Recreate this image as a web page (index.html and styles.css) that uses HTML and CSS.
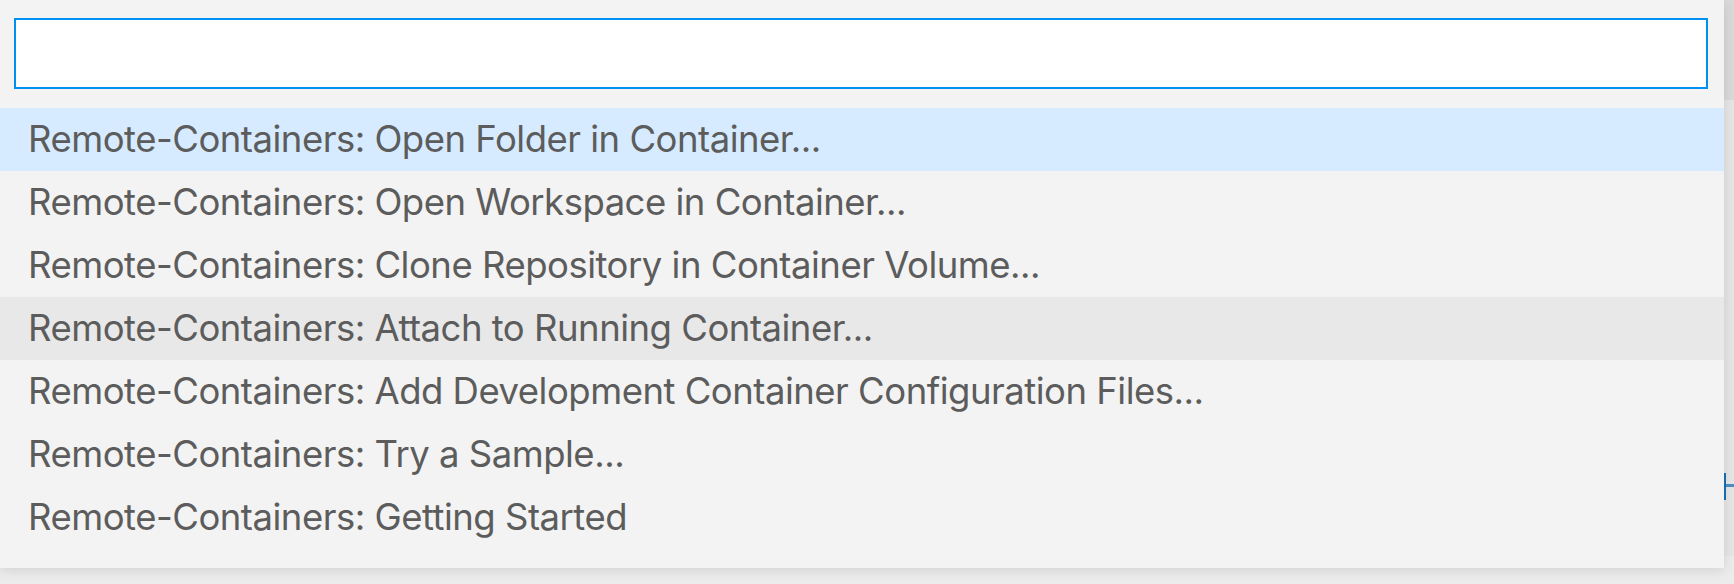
FILE: index.html
```html
<!DOCTYPE html>
<html>
<head>
<meta charset="utf-8">
<link rel="stylesheet" href="styles.css">
</head>
<body>
<div class="workbench">
  <div class="scrollbar-track"><div class="scrollbar-thumb"></div></div>
  <div class="tab-marker"></div>
  <div class="quick-input">
    <div class="input-box"><input class="input" type="text"></div>
    <ul class="list">
      <li class="row selected">Remote-Containers: Open Folder in Container...</li>
      <li class="row">Remote-Containers: Open Workspace in Container...</li>
      <li class="row">Remote-Containers: Clone Repository in Container Volume...</li>
      <li class="row hovered">Remote-Containers: Attach to Running Container...</li>
      <li class="row">Remote-Containers: Add Development Container Configuration Files...</li>
      <li class="row">Remote-Containers: Try a Sample...</li>
      <li class="row">Remote-Containers: Getting Started</li>
    </ul>
  </div>
</div>
</body>
</html>
```

FILE: styles.css
```css
* { box-sizing: border-box; }
html, body {
  margin: 0;
  padding: 0;
  background: #e9e9e9;
  overflow: hidden;
}
.workbench {
  position: relative;
  width: 1734px;
  height: 584px;
  background: #ececec;
  font-family: "Inter", "Liberation Sans", sans-serif;
}
.scrollbar-track {
  position: absolute;
  right: 0;
  top: 0;
  width: 10px;
  height: 556px;
  background: #e6e6e6;
}
.scrollbar-thumb {
  height: 100px;
  background: #dadada;
}
.tab-marker {
  position: absolute;
  left: 1724px;
  top: 473px;
  width: 10px;
  height: 27px;
  border-left: 2px solid #1a6fb5;
}
.tab-marker::after {
  content: "";
  position: absolute;
  left: 0;
  right: 0;
  top: 11px;
  height: 3px;
  background: #4a8fc8;
}
.quick-input {
  position: relative;
  width: 1724px;
  height: 568px;
  background: #f3f3f3;
  padding: 18px 16px 0 14px;
  box-shadow: 0 2px 12px rgba(0, 0, 0, 0.12);
}
.input-box {
  height: 71px;
  border: 2px solid #0090f1;
  background: #ffffff;
}
.input {
  width: 100%;
  height: 100%;
  border: 0;
  outline: none;
  background: transparent;
}
.list {
  list-style: none;
  margin: 19px -16px 0 -14px;
  padding: 0;
}
.row {
  height: 63px;
  line-height: 63px;
  padding-left: 28px;
  font-size: 36.5px;
  letter-spacing: -0.5px;
  color: #5c5c5c;
  white-space: nowrap;
}
.row.selected { background: #d6ebff; }
.row.hovered { background: #e8e8e8; }
```
